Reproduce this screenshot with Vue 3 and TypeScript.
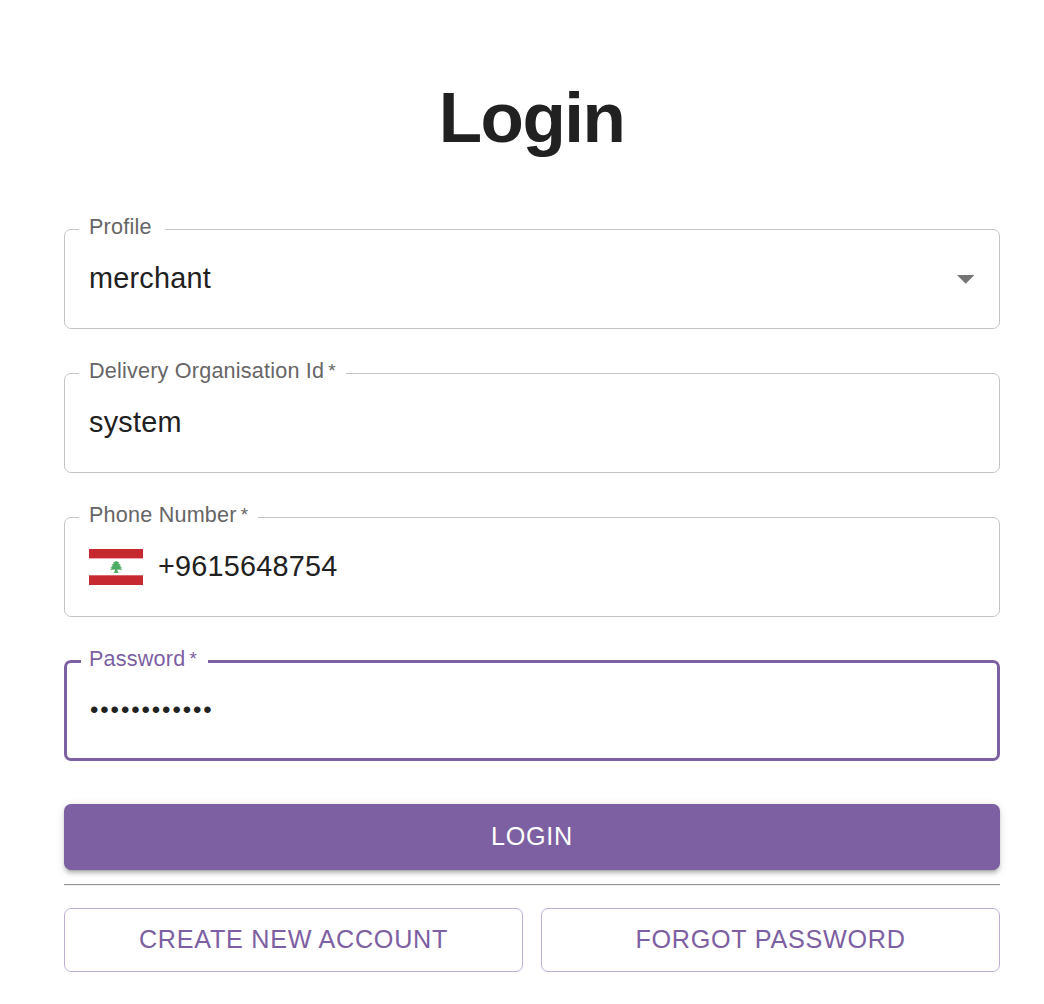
<script setup lang="ts">
import { ref } from 'vue'

interface Field {
  id: string
  label: string
  required: boolean
  value: string
  type: string
  notch: number
  kind: 'select' | 'text' | 'phone'
  focused?: boolean
}

const fields = ref<Field[]>([
  { id: 'profile', label: 'Profile', required: false, value: 'merchant', type: 'text', notch: 86, kind: 'select' },
  { id: 'org', label: 'Delivery Organisation Id', required: true, value: 'system', type: 'text', notch: 267, kind: 'text' },
  { id: 'phone', label: 'Phone Number', required: true, value: '+9615648754', type: 'text', notch: 179, kind: 'phone' },
  { id: 'password', label: 'Password', required: true, value: 'abcdefghijkl', type: 'password', notch: 127, kind: 'text', focused: true },
])
</script>

<template>
  <main class="page">
    <h1 class="title">Login</h1>
    <form class="form" @submit.prevent>
      <div v-for="f in fields" :key="f.id" class="field" :class="{ focused: f.focused }">
        <label class="label" :for="f.id" :style="{ width: f.notch + 'px' }">{{ f.label }}<span v-if="f.required" class="star">&#8201;*</span></label>
        <svg v-if="f.kind === 'phone'" class="flag" width="54" height="36" viewBox="0 0 54 36">
          <rect width="54" height="36" fill="#fff" />
          <rect width="54" height="9.4" fill="#c6292f" />
          <rect y="26.3" width="54" height="9.7" fill="#c6292f" />
          <path fill="#4fae66" d="M27.3 12l3.2 1.8-1.3.5 3 2-1.9.3 2.9 2.1-1.9.1 2.2 2.2-4.9-.5-.2 1.6 1.4 1.9h-5.2l1.4-1.9-.2-1.6-4.9.5 2.2-2.2-1.9-.1 2.9-2.1-1.9-.3 3-2-1.3-.5z" />
        </svg>
        <input :id="f.id" v-model="f.value" class="input" :class="{ secret: f.type === 'password' }" :type="f.type" :readonly="f.kind === 'select'" />
        <svg v-if="f.kind === 'select'" class="arrow" width="18" height="9" viewBox="0 0 18 9">
          <path d="M0 0h17.4l-8.7 8.8z" fill="#757575" />
        </svg>
      </div>
      <button class="btn primary" type="submit">LOGIN</button>
      <hr class="rule" />
      <div class="actions">
        <button class="btn outlined" type="button">CREATE NEW ACCOUNT</button>
        <button class="btn outlined" type="button">FORGOT PASSWORD</button>
      </div>
    </form>
  </main>
</template>

<style>
body {
  margin: 0;
  background: #fff;
}
</style>

<style scoped>
.page {
  box-sizing: border-box;
  height: 1004px;
  padding: 76px 44px 0 64px;
  overflow: hidden;
  font-family: "Liberation Sans", Helvetica, Arial, sans-serif;
  color: #212121;
}
.title {
  margin: 0 0 69px;
  height: 84px;
  font-size: 71px;
  line-height: 84px;
  font-weight: 700;
  letter-spacing: -1.5px;
  text-indent: -1px;
  text-align: center;
}
.form {
  display: flex;
  flex-direction: column;
}
.field {
  position: relative;
  box-sizing: border-box;
  display: flex;
  align-items: center;
  height: 100px;
  margin-bottom: 44px;
  padding: 0 24px;
  border: 1px solid #c4c4c4;
  border-radius: 7px;
}
.label {
  position: absolute;
  box-sizing: border-box;
  left: 14px;
  top: -16px;
  height: 26px;
  padding-left: 10px;
  background: #fff;
  color: #666;
  font-size: 21.6px;
  line-height: 26px;
  letter-spacing: 0.2px;
  white-space: nowrap;
}
.star {
  position: relative;
  top: -1px;
  font-size: 19px;
}
.input {
  flex: 1;
  min-width: 0;
  height: 40px;
  padding: 0 0 2px;
  box-sizing: border-box;
  border: 0;
  outline: 0;
  background: transparent;
  color: #212121;
  font-family: inherit;
  font-size: 28.8px;
  letter-spacing: 0.24px;
}
.secret {
  padding: 0 0 2px 1px;
  font-size: 24px;
  letter-spacing: 1.9px;
}
.flag {
  flex: none;
  margin-right: 15px;
}
.arrow {
  flex: none;
}
.focused {
  height: 101px;
  margin-top: -1px;
  margin-bottom: 43px;
  padding: 0 22px;
  border: 3px solid #7c60a2;
}
.focused .label {
  left: 14px;
  top: -17px;
  padding-left: 8px;
  color: #7c60a2;
}
.btn {
  box-sizing: border-box;
  padding: 0 0 2px;
  border-radius: 7px;
  font-family: inherit;
  font-size: 25.2px;
  letter-spacing: 0.72px;
}
.primary {
  height: 66px;
  border: 0;
  background: #7c60a2;
  color: #fff;
  box-shadow: 0 5px 2px -4px rgba(0, 0, 0, 0.2), 0 3.6px 3.6px rgba(0, 0, 0, 0.14), 0 1.8px 9px rgba(0, 0, 0, 0.12);
}
.rule {
  box-sizing: border-box;
  width: 100%;
  height: 2px;
  margin: 14px 0 22px;
  border: 0;
  border-top: 1px solid #949494;
  background: #ececec;
}
.actions {
  display: flex;
  gap: 18px;
}
.outlined {
  flex: 1;
  height: 64px;
  border: 1px solid #bdafd0;
  background: #fff;
  color: #7c60a2;
}
</style>
